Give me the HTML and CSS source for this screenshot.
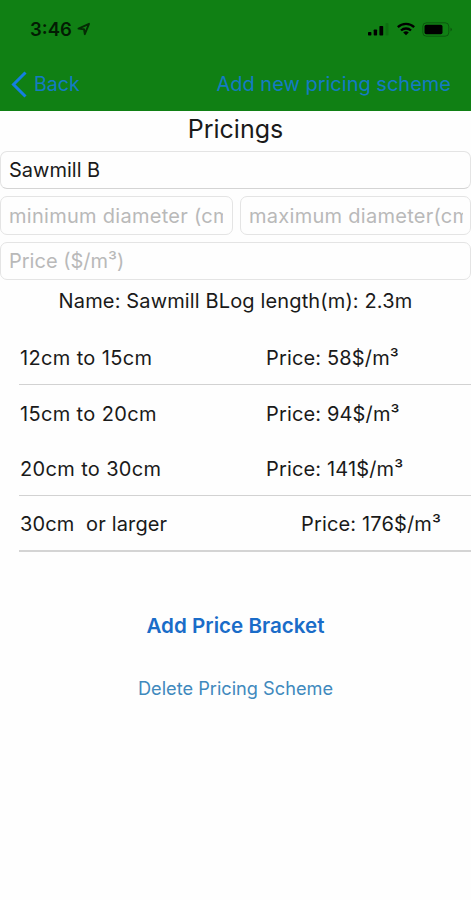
FILE: index.html
```
<!DOCTYPE html>
<html lang="en">
<head>
  <meta charset="UTF-8" />
  <meta name="viewport" content="width=device-width, initial-scale=1" />
  <title>Pricings</title>
  <link rel="stylesheet" href="styles.css">
</head>
<body>

<header class="header">
  <div class="status-bar">
    <span class="time">3:46</span>
    <svg class="location" width="14" height="14" viewBox="0 0 14 14"><path d="M1.5 6.6 12 1.8 7.8 12.2 7 7.2z" fill="none" stroke="#052b05" stroke-width="1.9" stroke-linejoin="round"/></svg>
    <svg class="signal" width="22" height="14" viewBox="0 0 22 14">
      <rect x="1" y="10" width="3.4" height="3.5" rx="0.7"/>
      <rect x="6.7" y="7.5" width="3.4" height="6" rx="0.7"/>
      <rect x="12.4" y="4" width="3.8" height="9.5" rx="0.7"/>
      <rect x="18.5" y="1" width="3" height="12.5" rx="0.7" opacity="0.12"/>
    </svg>
    <svg class="wifi" width="20" height="14" viewBox="0 0 20 14">
      <path d="M1.8 5.2a11.8 11.8 0 0 1 16.4 0M5 8.5a7.2 7.2 0 0 1 10 0" fill="none" stroke="#000" stroke-width="2.3"/>
      <path d="M10 13.2 7.2 10.6a4 4 0 0 1 5.6 0z"/>
    </svg>
    <svg class="battery" width="31" height="15" viewBox="0 0 31 15">
      <rect x="0.8" y="0.8" width="26" height="13.4" rx="3.6" fill="none" stroke="#000" stroke-opacity="0.3"/>
      <rect x="2.5" y="2.8" width="18" height="9.4" rx="1.8"/>
      <path d="M28.5 5.5v4q1.4-.8 1.4-2t-1.4-2z" opacity="0.35"/>
    </svg>
  </div>
  <nav class="nav-bar">
    <a class="back">
      <svg width="17" height="27" viewBox="0 0 17 27"><path d="M14.5 1.5 2.5 13.5l12 12" fill="none" stroke="#147fe0" stroke-width="3"/></svg>
      <span class="back-label">Back</span>
    </a>
    <a class="add-scheme">Add new pricing scheme</a>
  </nav>
</header>

<main>
  <h1 class="title">Pricings</h1>

  <form class="fields">
    <input class="field dark" type="text" value="Sawmill B">
    <div class="field-row">
      <input class="field" type="text" placeholder="minimum diameter (cm)">
      <input class="field" type="text" placeholder="maximum diameter(cm)">
    </div>
    <input class="field" type="text" placeholder="Price ($/m³)">
  </form>

  <p class="summary">Name: Sawmill BLog length(m): 2.3m</p>

  <ul class="brackets">
    <li class="bracket line"><span class="range">12cm to 15cm</span><span class="price">Price: 58$/m³</span></li>
    <li class="bracket"><span class="range">15cm to 20cm</span><span class="price">Price: 94$/m³</span></li>
    <li class="bracket line"><span class="range">20cm to 30cm</span><span class="price">Price: 141$/m³</span></li>
    <li class="bracket last"><span class="range">30cm&nbsp; or larger</span><span class="price">Price: 176$/m³</span></li>
  </ul>

  <div class="actions">
    <button class="add">Add Price Bracket</button>
    <button class="delete">Delete Pricing Scheme</button>
  </div>
</main>

</body>
</html>
```
FILE: styles.css
```
* { box-sizing: border-box; }
html, body { margin: 0; padding: 0; height: 100%; overflow: hidden; background-color: #fefefe; color: #1a1a1a; font-family: Inter, "Liberation Sans", sans-serif; font-size: 20px; }

.header { height: 111px; background-color: #108014; }
.status-bar { display: flex; align-items: center; height: 58px; padding: 0 18px 0 30px; }
.time { font-size: 18.5px; font-weight: 600; color: #031c03; }
.location { margin-left: 5px; }
.signal { margin-left: auto; margin-right: 7px; }
.wifi { margin-right: 6px; }
.nav-bar { display: flex; justify-content: space-between; align-items: center; height: 52px; padding: 0 20px 0 11px; color: #147bc4; }
.back { display: flex; align-items: center; gap: 6px; }
.back-label { font-size: 19.6px; }

.title { margin: 0; height: 40px; line-height: 36px; text-align: center; font-size: 25px; font-weight: 400; }

.fields { display: flex; flex-direction: column; gap: 7px; }
.field-row { display: flex; gap: 7px; }
.field { flex: 1; min-width: 0; width: 100%; height: 38px; min-height: 38px; padding: 0 7px 0 8px; border: 1px solid #e4e4e4; border-radius: 7px; background-color: #fefefe; font: inherit; color: #1a1a1a; outline: none; }
.field.dark { border-bottom-color: #d4d4d4; }
.field-row .field { height: 39px; letter-spacing: 0.28px; }
.field-row .field:first-child { flex: 0 0 233px; padding-right: 9px; }
.field::placeholder { color: #b9b9b9; opacity: 1; }

.summary { margin: 0; height: 50px; line-height: 42px; text-align: center; letter-spacing: 0.14px; }

.brackets { list-style: none; margin: 0; padding: 0 0 0 19px; }
.bracket { display: flex; align-items: center; height: 55.4px; padding: 2px 0 0 1px; border-bottom: 1px solid transparent; }
.bracket.line { border-bottom-color: #d2d2d2; }
.bracket.last { border-bottom: 2px solid #d4d4d4; }
.range { width: 246px; letter-spacing: 0.35px; }
.last .range { width: 281px; letter-spacing: 0.15px; }
.price { letter-spacing: 0.15px; }

.actions { display: flex; flex-direction: column; align-items: center; padding-top: 60px; gap: 35px; }
.actions button { padding: 0; border: none; background: none; font-family: inherit; cursor: pointer; }
.actions .add { font-size: 20.6px; line-height: 28px; font-weight: 600; color: #1a6cc8; }
.actions .delete { font-size: 18.2px; line-height: 26px; color: #4089bd; }
```
